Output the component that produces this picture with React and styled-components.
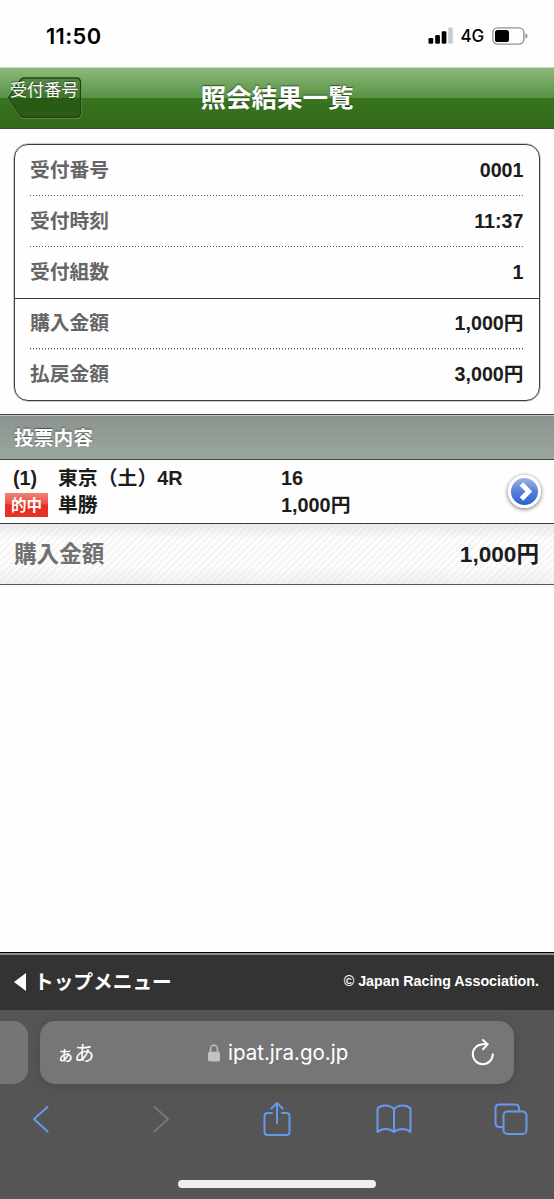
import React from "react";
import styled, { createGlobalStyle, css } from "styled-components";

// --- Global ---

const GlobalStyle = createGlobalStyle`
  * {
    box-sizing: border-box;
  }

  body {
    margin: 0;
    background: #fefefe;
    font-family: "Liberation Sans", "Noto Sans CJK JP", sans-serif;
    color: #1c1c1c;
  }
`;

// --- Styled Components ---

const Screen = styled.div`
  display: flex;
  flex-direction: column;
  width: 554px;
  height: 1199px;
  overflow: hidden;
  white-space: nowrap;
`;

const StatusBar = styled.div`
  flex: none;
  display: flex;
  align-items: center;
  height: 67px;
  padding: 4px 26px 0 46px;
  color: #000;
  font-family: Inter, sans-serif;
`;

const Clock = styled.div`
  flex: 1;
  font-size: 21.8px;
  font-weight: 600;
  letter-spacing: 0.4px;
`;

const Network = styled.div`
  margin: 0 8px 0 8px;
  font-size: 17px;
  font-weight: 500;
  letter-spacing: -0.2px;
`;

const Header = styled.header`
  flex: none;
  display: grid;
  grid-template-columns: 82px 1fr 82px;
  align-items: center;
  height: 62px;
  border-top: 1px solid #c3d9b8;
  border-bottom: 1px solid #3e4a39;
  background: linear-gradient(
    #8fb97d 0,
    #569243 30px,
    #37751d 30px,
    #33691c 60px
  );
`;

const BackButton = styled.button`
  display: grid;
  width: 76px;
  height: 44px;
  margin: 0 0 0 7px;
  padding: 0;
  border: 0;
  background: none;
  font: inherit;

  > * {
    grid-area: 1 / 1;
  }
`;

const BackLabel = styled.span`
  padding: 3px 0 0 3px;
  color: #fff;
  font-size: 17.1px;
  line-height: 24px;
  text-align: left;
  text-shadow: 0 -1px 1px rgba(0, 0, 0, 0.45);
`;

const Title = styled.h1`
  margin: 0;
  color: #fff;
  font-size: 25.5px;
  line-height: 36px;
  text-align: center;
  text-shadow: 0 -1px 1px rgba(0, 0, 0, 0.5);
`;

const Main = styled.main`
  flex: 1;
`;

const SummaryCard = styled.dl`
  margin: 15px 14px 13px;
  height: 257px;
  border: 1px solid #3c3c3f;
  border-radius: 14px;
  box-shadow: 0 0 0 0.5px rgba(60, 60, 63, 0.5);
`;

const SummaryRow = styled.div`
  display: flex;
  align-items: center;
  justify-content: space-between;
  height: 51.2px;
  margin: 0 15px;
  padding-bottom: 2px;
  font-size: 19.8px;
  font-weight: bold;
  line-height: 24px;

  ${({ $divider }) =>
    $divider === "dotted" &&
    css`
      background: repeating-linear-gradient(
          90deg,
          #555 0 1.5px,
          transparent 1.5px 3px
        )
        0 100% / 100% 1.5px no-repeat;
    `}

  ${({ $divider }) =>
    $divider === "solid" &&
    css`
      margin: 0;
      padding: 0 15px 1px;
      border-bottom: 1.5px solid #3c3c3f;
    `}
`;

const Label = styled.dt`
  color: #666;
`;

const Value = styled.dd`
  margin: 0 0.5px 0 0;
  font-size: 19.7px;
`;

const SectionTitle = styled.h2`
  display: flex;
  align-items: center;
  height: 46px;
  margin: 0;
  padding: 1px 14px 0;
  border-top: 1px solid #424645;
  border-bottom: 1px solid #424645;
  background: linear-gradient(#8b938e, #9aa69c);
  box-shadow: inset 0 1px #bcc3be;
  color: #fff;
  font-size: 19.8px;
  line-height: 24px;
  text-shadow: 0 -1px 1px rgba(0, 0, 0, 0.45);
`;

const Bet = styled.div`
  display: grid;
  grid-template-columns: 53px 223px 1fr 33px;
  grid-template-rows: 27px 27px;
  align-content: center;
  align-items: center;
  height: 64px;
  padding: 0 13px 0 5px;
  border-bottom: 1px solid #3a3a3a;
  font-size: 19.85px;
  font-weight: bold;
  line-height: 27px;
`;

const BetNumber = styled.span`
  padding-left: 8px;
  font-size: 19.7px;
`;

const HitBadge = styled.span`
  width: 43px;
  height: 24px;
  background: linear-gradient(#f08277 0, #ea5145 45%, #e52d22 50%, #e93226);
  color: #fff;
  font-size: 15.5px;
  line-height: 25px;
  text-align: center;
`;

const DetailButton = styled.button`
  grid-column: 4;
  grid-row: 1 / 3;
  display: grid;
  place-items: center;
  width: 33px;
  height: 33px;
  padding: 0;
  border: 3px solid #fff;
  border-radius: 50%;
  background: linear-gradient(#9db5e6, #5580d6 50%, #2d60d0);
  box-shadow: 0 1px 4px rgba(0, 0, 0, 0.6);
`;

const Total = styled.div`
  display: flex;
  align-items: center;
  justify-content: space-between;
  height: 61px;
  padding: 1px 15px 0 14px;
  border-bottom: 1.5px solid #555;
  background: linear-gradient(
      rgba(215, 215, 215, 0.5),
      transparent 25%,
      transparent 70%,
      rgba(228, 228, 228, 0.5)
    ),
    repeating-linear-gradient(135deg, #f5f5f5 0 2.5px, #fefefe 2.5px 5px);
  font-size: 22.6px;
  font-weight: bold;
  line-height: 28px;
`;

const TotalLabel = styled.span`
  color: #707070;
`;

const Footer = styled.footer`
  flex: none;
  display: flex;
  align-items: center;
  justify-content: space-between;
  height: 58px;
  padding: 0 15px 0 14px;
  border-top: 1px solid #000;
  background: #333;
  box-shadow: inset 0 2px #8c8f8e;
  color: #fff;
  font-weight: bold;
  line-height: 24px;
`;

const TopMenu = styled.a`
  display: flex;
  align-items: center;
  gap: 8px;
  font-size: 19.7px;
`;

const Copyright = styled.small`
  padding-bottom: 1px;
  font-size: 14.25px;
`;

const BrowserChrome = styled.div`
  flex: none;
  display: flex;
  flex-direction: column;
  height: 189px;
  padding-top: 11px;
  background: #555;
`;

const TabStrip = styled.div`
  display: flex;
  gap: 12px;
  height: 63px;
`;

const PreviousTab = styled.div`
  width: 28px;
  border-radius: 0 15px 15px 0;
  background: #757575;
`;

const AddressBar = styled.div`
  display: flex;
  align-items: center;
  width: 474px;
  padding: 0 19px 0 17px;
  border-radius: 15px;
  background: #767676;
  box-shadow: 0 2px 12px rgba(0, 0, 0, 0.13);
  color: #fff;
`;

const TextSize = styled.span`
  display: flex;
  align-items: baseline;
  width: 151px;
  padding-bottom: 2px;
  font-family: "Noto Sans CJK JP", sans-serif;
  font-size: 20.5px;

  small {
    font-size: 17px;
    font-weight: 500;
  }
`;

const Url = styled.span`
  flex: 1;
  padding-left: 8px;
  font-family: Inter, sans-serif;
  font-size: 20.5px;
`;

const Toolbar = styled.nav`
  display: grid;
  grid-template-columns: 121px 110px 113px 118px auto;
  align-items: center;
  height: 70px;
  padding-left: 32px;
  color: #6699ee;
`;

const HomeIndicator = styled.div`
  width: 198px;
  height: 8px;
  margin: 26px auto 0;
  border-radius: 4px;
  background: #f0f0f0;
`;

// --- Icons ---

function SignalIcon() {
  return (
    <svg width="25" height="17" viewBox="0 0 25 17">
      <rect x="0.5" y="11" width="4.7" height="5.7" rx="1.3" />
      <rect x="7.2" y="8" width="4.7" height="8.7" rx="1.3" />
      <rect x="13.7" y="4.3" width="4.7" height="12.4" rx="1.3" />
      <rect x="20.2" y="0.5" width="4.6" height="16.2" rx="1.3" fill="#ccc" />
    </svg>
  );
}

function BatteryIcon() {
  return (
    <svg width="36" height="18" viewBox="0 0 36 18">
      <rect
        x="0.9"
        y="0.9"
        width="31"
        height="16.2"
        rx="4.8"
        fill="none"
        stroke="#929292"
        strokeWidth="1.4"
      />
      <rect x="3" y="3" width="14" height="12" rx="2.6" />
      <path d="M33.5 6.2q2 1 2 2.8t-2 2.8z" fill="#888" />
    </svg>
  );
}

function BackShape() {
  return (
    <svg width="76" height="44" viewBox="0 0 76 44">
      <defs>
        <linearGradient id="backFill" x1="0" y1="0" x2="0" y2="1">
          <stop offset="0" stopColor="#5b8a48" />
          <stop offset="0.5" stopColor="#3f742c" />
          <stop offset="0.5" stopColor="#295b14" />
          <stop offset="1" stopColor="#2b5b17" />
        </linearGradient>
      </defs>
      <path
        d="M17 3H69.5Q74 3 74 7.5V38Q74 42.5 69.5 42.5H17Q15 42.5 13.5 40.5L1.5 23L13.5 5Q15 3 17 3Z"
        fill="none"
        stroke="#8bb07b"
        strokeOpacity="0.7"
      />
      <path
        d="M17 2H69Q73.5 2 73.5 6.5V37Q73.5 41.5 69 41.5H17Q15 41.5 13.5 39.5L1.5 22L13.5 4Q15 2 17 2Z"
        fill="url(#backFill)"
        stroke="#1f4411"
        strokeWidth="1.3"
      />
    </svg>
  );
}

function ChevronIcon() {
  return (
    <svg width="27" height="27" viewBox="0 0 27 27">
      <path
        d="M10.5 6L17.8 13.5L10.5 21"
        fill="none"
        stroke="#fff"
        strokeWidth="4.8"
      />
    </svg>
  );
}

function MenuArrowIcon() {
  return (
    <svg width="12" height="18" viewBox="0 0 12 18">
      <path d="M12 0V18L0 9Z" fill="#fff" />
    </svg>
  );
}

function LockIcon() {
  return (
    <svg width="12" height="18" viewBox="0 0 12 18">
      <path
        d="M2.5 9V5.2a3.5 3.9 0 0 1 7 0V9"
        fill="none"
        stroke="#c2c2c4"
        strokeWidth="1.6"
      />
      <rect y="7.8" width="12" height="9.7" rx="1.8" fill="#c2c2c4" />
    </svg>
  );
}

function ReloadIcon() {
  return (
    <svg
      width="24"
      height="28"
      viewBox="0 0 24 28"
      fill="none"
      stroke="#fff"
      strokeWidth="2"
      strokeLinecap="round"
      strokeLinejoin="round"
    >
      <path d="M21.8 15.2A10 10 0 1 1 11.8 5.2H16.5" />
      <path d="M12 1L16.6 5.4L12 10.2" />
    </svg>
  );
}

function ToolbarIcon({ width, height, color, children }) {
  return (
    <svg
      width={width}
      height={height}
      viewBox={`0 0 ${width} ${height}`}
      fill="none"
      stroke={color || "currentColor"}
      strokeWidth="2"
      strokeLinecap="round"
      strokeLinejoin="round"
    >
      {children}
    </svg>
  );
}

// --- Data ---

const summary = [
  { label: "受付番号", value: "0001", divider: "dotted" },
  { label: "受付時刻", value: "11:37", divider: "dotted" },
  { label: "受付組数", value: "1", divider: "solid" },
  { label: "購入金額", value: "1,000円", divider: "dotted" },
  { label: "払戻金額", value: "3,000円" },
];

// --- Main Component ---

function App() {
  return (
    <Screen>
      <GlobalStyle />

      <StatusBar>
        <Clock>11:50</Clock>
        <SignalIcon />
        <Network>4G</Network>
        <BatteryIcon />
      </StatusBar>

      <Header>
        <BackButton>
          <BackShape />
          <BackLabel>受付番号</BackLabel>
        </BackButton>
        <Title>照会結果一覧</Title>
      </Header>

      <Main>
        <SummaryCard>
          {summary.map((row) => (
            <SummaryRow key={row.label} $divider={row.divider}>
              <Label>{row.label}</Label>
              <Value>{row.value}</Value>
            </SummaryRow>
          ))}
        </SummaryCard>

        <SectionTitle>投票内容</SectionTitle>
        <Bet>
          <BetNumber>(1)</BetNumber>
          <span>東京（土）4R</span>
          <span>16</span>
          <DetailButton>
            <ChevronIcon />
          </DetailButton>
          <HitBadge>的中</HitBadge>
          <span>単勝</span>
          <span>1,000円</span>
        </Bet>
        <Total>
          <TotalLabel>購入金額</TotalLabel>
          <span>1,000円</span>
        </Total>
      </Main>

      <Footer>
        <TopMenu>
          <MenuArrowIcon />
          トップメニュー
        </TopMenu>
        <Copyright>© Japan Racing Association.</Copyright>
      </Footer>

      <BrowserChrome>
        <TabStrip>
          <PreviousTab />
          <AddressBar>
            <TextSize>
              <small>ぁ</small>あ
            </TextSize>
            <LockIcon />
            <Url>ipat.jra.go.jp</Url>
            <ReloadIcon />
          </AddressBar>
        </TabStrip>
        <Toolbar>
          <ToolbarIcon width={17} height={28}>
            <path d="M15.5 2L2 14L15.5 26.5" />
          </ToolbarIcon>
          <ToolbarIcon width={17} height={28} color="#777">
            <path d="M1.5 2L15 14L1.5 26.5" />
          </ToolbarIcon>
          <ToolbarIcon width={28} height={36}>
            <path d="M9 12H4.5Q1.5 12 1.5 15V31Q1.5 34 4.5 34H23.5Q26.5 34 26.5 31V15Q26.5 12 23.5 12H19" />
            <path d="M14 22V2M8.5 7.5L14 2L19.5 7.5" />
          </ToolbarIcon>
          <ToolbarIcon width={36} height={30}>
            <path d="M18 5Q14.5 1.5 9.5 1.5Q4.5 1.5 1.5 4.5V28Q5 25 9.5 25Q14.5 25 18 28Q21.5 25 26.5 25Q31 25 34.5 28V4.5Q31.5 1.5 26.5 1.5Q21.5 1.5 18 5ZM18 5V28" />
          </ToolbarIcon>
          <ToolbarIcon width={34} height={32}>
            <rect x="9.5" y="8.5" width="23" height="22.5" rx="4" />
            <path d="M9.5 24H5.5Q1.5 24 1.5 20V5.5Q1.5 1.5 5.5 1.5H21Q25 1.5 25 5.5V8.5" />
          </ToolbarIcon>
        </Toolbar>
        <HomeIndicator />
      </BrowserChrome>
    </Screen>
  );
}

export default App;
